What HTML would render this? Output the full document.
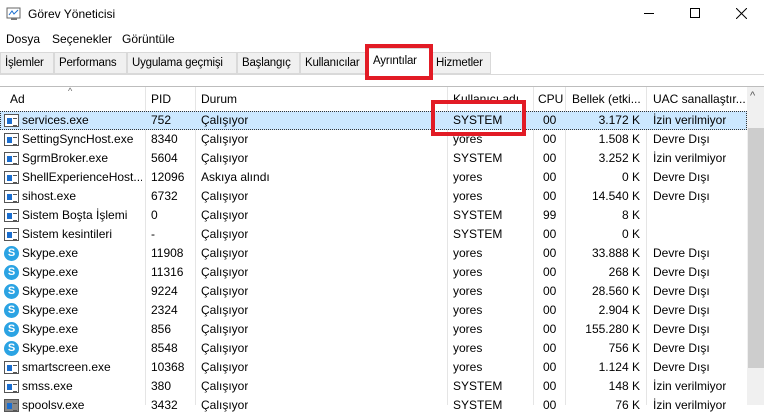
<!DOCTYPE html>
<html><head><meta charset="utf-8"><style>
*{margin:0;padding:0;box-sizing:border-box}
body{width:764px;height:405px;overflow:hidden;background:#fff;font-family:"Liberation Sans",sans-serif;font-size:12px;color:#000;position:relative}
.a{position:absolute;white-space:nowrap}
.tab{position:absolute;top:52px;height:22px;border:1px solid #d9d9d9;background:#f0f0f0;line-height:20px;padding:0 4px;font-size:11.5px;white-space:nowrap;overflow:hidden;letter-spacing:-0.2px}
.row{position:absolute;left:0;width:747px;height:19px;line-height:19px}
.row span{position:absolute;white-space:nowrap;overflow:hidden}
.vl{position:absolute;top:87px;width:1px;height:318px;background:#e5e5e5}
.ic{position:absolute;left:4px;top:3px;width:15px;height:13px;border:1px solid #555;background:#fff}
.ic:before{content:"";position:absolute;left:2px;top:3px;width:5px;height:6px;background:#1b6ecf}
.ic:after{content:"";position:absolute;left:8px;top:3px;width:4px;height:6px;border-top:1px solid #555;border-bottom:1px solid #555}
.sk{position:absolute;left:4px;top:2px;width:15px;height:15px;border-radius:50%;background:#2ba3e3;color:#fff;font-weight:bold;font-size:11px;line-height:15px;text-align:center;font-style:normal}
.red{position:absolute;border:4px solid #e21b25}
</style></head><body>
<svg class="a" style="left:6px;top:6px" width="16" height="16"><rect x="1" y="2" width="13" height="10" fill="#fff" stroke="#666"/><polyline points="3,9 6,5 8,8 12,4" fill="none" stroke="#1b6ecf"/><rect x="5" y="12" width="6" height="2" fill="#777"/></svg>
<div class="a" style="left:28px;top:7px;font-size:12px">Görev Yöneticisi</div>
<div class="a" style="left:644px;top:13px;width:10px;height:1px;background:#000"></div>
<div class="a" style="left:690px;top:8px;width:10px;height:10px;border:1px solid #000"></div>
<svg class="a" style="left:736px;top:8px" width="11" height="11"><path d="M0 0L11 11M11 0L0 11" stroke="#000"/></svg>
<div class="a" style="left:6px;top:32px">Dosya</div>
<div class="a" style="left:52px;top:32px">Seçenekler</div>
<div class="a" style="left:122px;top:32px">Görüntüle</div>
<div class="a" style="left:0;top:74px;width:764px;height:1px;background:#d9d9d9"></div>
<div class="tab" style="left:0;width:54px">İşlemler</div>
<div class="tab" style="left:54px;width:73px">Performans</div>
<div class="tab" style="left:127px;width:110px">Uygulama geçmişi</div>
<div class="tab" style="left:237px;width:63px">Başlangıç</div>
<div class="tab" style="left:300px;width:68px">Kullanıcılar</div>
<div class="a" style="left:368px;top:48px;width:63px;height:27px;background:#fff;border:1px solid #d9d9d9;border-bottom:none;line-height:24px;padding-left:4px;font-size:11.5px;letter-spacing:-0.2px">Ayrıntılar</div>
<div class="tab" style="left:431px;width:60px">Hizmetler</div>
<div class="a" style="left:0;top:86px;width:764px;height:1px;background:#bdbdbd"></div>
<div class="a" style="left:68px;top:86px;font-size:9px;color:#666">^</div>
<div class="vl" style="left:145px"></div><div class="vl" style="left:195px"></div><div class="vl" style="left:447px"></div><div class="vl" style="left:533px"></div><div class="vl" style="left:565px"></div><div class="vl" style="left:646px"></div>
<div class="row" style="top:90px"><span style="left:10px">Ad</span><span style="left:151px">PID</span><span style="left:201px">Durum</span><span style="left:453px">Kullanıcı adı</span><span style="left:538px">CPU</span><span style="left:572px">Bellek (etki...</span><span style="left:653px">UAC sanallaştır...</span></div>
<div class="a" style="left:747px;top:87px;width:17px;height:318px;background:#f0f0f0"></div>
<div class="a" style="left:750px;top:90px;font-size:11px;color:#555">^</div>
<div class="a" style="left:748px;top:128px;width:16px;height:240px;background:#cdcdcd"></div>
<div class="a" style="left:0;top:111px;width:747px;height:19px;background:#cce8ff;border:1px dotted #333"></div>
<div class="row" style="top:111px"><i class="ic"></i><span style="left:22px">services.exe</span><span style="left:151px">752</span><span style="left:201px">Çalışıyor</span><span style="left:453px">SYSTEM</span><span style="left:543px">00</span><span style="right:107px">3.172 K</span><span style="left:653px">İzin verilmiyor</span></div>
<div class="row" style="top:130px"><i class="ic"></i><span style="left:22px">SettingSyncHost.exe</span><span style="left:151px">8340</span><span style="left:201px">Çalışıyor</span><span style="left:453px">yores</span><span style="left:543px">00</span><span style="right:107px">1.508 K</span><span style="left:653px">Devre Dışı</span></div>
<div class="row" style="top:149px"><i class="ic"></i><span style="left:22px">SgrmBroker.exe</span><span style="left:151px">5604</span><span style="left:201px">Çalışıyor</span><span style="left:453px">SYSTEM</span><span style="left:543px">00</span><span style="right:107px">3.252 K</span><span style="left:653px">İzin verilmiyor</span></div>
<div class="row" style="top:168px"><i class="ic"></i><span style="left:22px;width:120px">ShellExperienceHost....</span><span style="left:151px">12096</span><span style="left:201px">Askıya alındı</span><span style="left:453px">yores</span><span style="left:543px">00</span><span style="right:107px">0 K</span><span style="left:653px">Devre Dışı</span></div>
<div class="row" style="top:187px"><i class="ic"></i><span style="left:22px">sihost.exe</span><span style="left:151px">6732</span><span style="left:201px">Çalışıyor</span><span style="left:453px">yores</span><span style="left:543px">00</span><span style="right:107px">14.540 K</span><span style="left:653px">Devre Dışı</span></div>
<div class="row" style="top:206px"><i class="ic"></i><span style="left:22px">Sistem Boşta İşlemi</span><span style="left:151px">0</span><span style="left:201px">Çalışıyor</span><span style="left:453px">SYSTEM</span><span style="left:543px">99</span><span style="right:107px">8 K</span></div>
<div class="row" style="top:225px"><i class="ic"></i><span style="left:22px">Sistem kesintileri</span><span style="left:151px">-</span><span style="left:201px">Çalışıyor</span><span style="left:453px">SYSTEM</span><span style="left:543px">00</span><span style="right:107px">0 K</span></div>
<div class="row" style="top:244px"><i class="sk">S</i><span style="left:22px">Skype.exe</span><span style="left:151px">11908</span><span style="left:201px">Çalışıyor</span><span style="left:453px">yores</span><span style="left:543px">00</span><span style="right:107px">33.888 K</span><span style="left:653px">Devre Dışı</span></div>
<div class="row" style="top:263px"><i class="sk">S</i><span style="left:22px">Skype.exe</span><span style="left:151px">11316</span><span style="left:201px">Çalışıyor</span><span style="left:453px">yores</span><span style="left:543px">00</span><span style="right:107px">268 K</span><span style="left:653px">Devre Dışı</span></div>
<div class="row" style="top:282px"><i class="sk">S</i><span style="left:22px">Skype.exe</span><span style="left:151px">9224</span><span style="left:201px">Çalışıyor</span><span style="left:453px">yores</span><span style="left:543px">00</span><span style="right:107px">28.560 K</span><span style="left:653px">Devre Dışı</span></div>
<div class="row" style="top:301px"><i class="sk">S</i><span style="left:22px">Skype.exe</span><span style="left:151px">2324</span><span style="left:201px">Çalışıyor</span><span style="left:453px">yores</span><span style="left:543px">00</span><span style="right:107px">2.904 K</span><span style="left:653px">Devre Dışı</span></div>
<div class="row" style="top:320px"><i class="sk">S</i><span style="left:22px">Skype.exe</span><span style="left:151px">856</span><span style="left:201px">Çalışıyor</span><span style="left:453px">yores</span><span style="left:543px">00</span><span style="right:107px">155.280 K</span><span style="left:653px">Devre Dışı</span></div>
<div class="row" style="top:339px"><i class="sk">S</i><span style="left:22px">Skype.exe</span><span style="left:151px">8548</span><span style="left:201px">Çalışıyor</span><span style="left:453px">yores</span><span style="left:543px">00</span><span style="right:107px">756 K</span><span style="left:653px">Devre Dışı</span></div>
<div class="row" style="top:358px"><i class="ic"></i><span style="left:22px">smartscreen.exe</span><span style="left:151px">10368</span><span style="left:201px">Çalışıyor</span><span style="left:453px">yores</span><span style="left:543px">00</span><span style="right:107px">1.124 K</span><span style="left:653px">Devre Dışı</span></div>
<div class="row" style="top:377px"><i class="ic"></i><span style="left:22px">smss.exe</span><span style="left:151px">380</span><span style="left:201px">Çalışıyor</span><span style="left:453px">SYSTEM</span><span style="left:543px">00</span><span style="right:107px">148 K</span><span style="left:653px">İzin verilmiyor</span></div>
<div class="row" style="top:396px"><i class="ic" style="background:#888"></i><span style="left:22px">spoolsv.exe</span><span style="left:151px">3432</span><span style="left:201px">Çalışıyor</span><span style="left:453px">SYSTEM</span><span style="left:543px">00</span><span style="right:107px">76 K</span><span style="left:653px">İzin verilmiyor</span></div>
<div class="red" style="left:365px;top:44px;width:68px;height:36px"></div>
<div class="red" style="left:431px;top:100px;width:95px;height:36px"></div>
</body></html>
